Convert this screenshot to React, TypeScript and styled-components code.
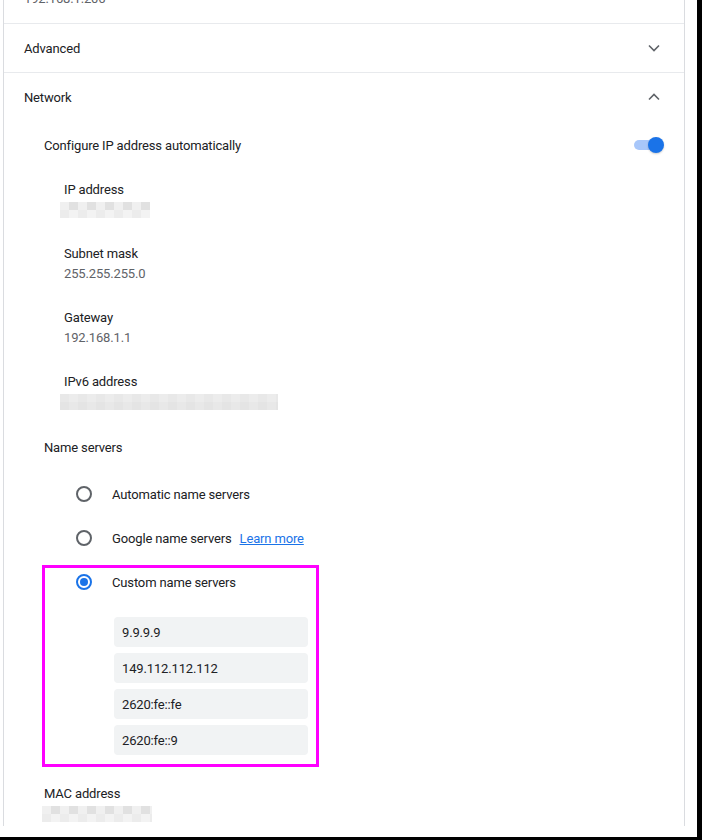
import styled, { createGlobalStyle } from 'styled-components';

const GlobalStyle = createGlobalStyle`
    html, body {
        margin: 0;
        padding: 0;
        background: #000;
    }
    body {
        font-family: Roboto, "Noto Sans", "Liberation Sans", sans-serif;
        font-size: 13px;
        letter-spacing: -0.15px;
        color: #202124;
    }
`

const Screen = styled.div`
    width: 697px;
    height: 837px;
    background: #fff;
    overflow: hidden;
`

const Card = styled.div`
    margin-left: 3px;
    width: 682px;
    height: 100%;
    box-sizing: border-box;
    border-left: 1px solid #dadce0;
    border-right: 1px solid #dadce0;
`

const TopValue = styled.div`
    margin-top: -11px;
    padding: 0 20px 14px;
    line-height: 20px;
    color: #5f6368;
`

const Row = styled.div`
    height: 48px;
    border-top: 1px solid #e8eaed;
    padding: 0 20px;
    display: flex;
    align-items: center;
    justify-content: space-between;
`

const RowTitle = styled.span`
    font-size: 13px;
    color: #202124;
`

const NetworkBody = styled.div`
    padding-left: 40px;
`

const ConfigRow = styled.div`
    height: 48px;
    padding-right: 20px;
    display: flex;
    align-items: center;
    justify-content: space-between;
`

const Toggle = styled.div`
    position: relative;
    width: 31px;
    height: 16px;

    .track {
        position: absolute;
        left: 1px;
        top: 3px;
        width: 24px;
        height: 10px;
        border-radius: 5px;
        background: #a8c7fa;
    }

    .knob {
        position: absolute;
        right: 0;
        top: 0;
        width: 16px;
        height: 16px;
        border-radius: 50%;
        background: #1a73e8;
        box-shadow: 0 1px 2px rgba(0, 0, 0, 0.2);
    }
`

const Details = styled.div`
    padding: 11px 0 0 20px;
    display: flex;
    flex-direction: column;
    gap: 24px;
`

const Field = styled.div`
    display: flex;
    flex-direction: column;
    line-height: 20px;
`

const Label = styled.div`
    color: #202124;
`

const Value = styled.div`
    color: #5f6368;
`

const SectionLabel = styled.div<{ $top: number }>`
    margin-top: ${p => p.$top}px;
    line-height: 20px;
    color: #202124;
`

const RadioList = styled.div`
    margin-top: 14px;
    margin-left: 32px;
    display: flex;
    flex-direction: column;
`

const RadioRow = styled.div`
    height: 44px;
    display: flex;
    align-items: center;
    gap: 20px;
`

const RadioCircle = styled.span<{ $checked?: boolean }>`
    width: 16px;
    height: 16px;
    box-sizing: border-box;
    border-radius: 50%;
    border: 2px solid ${p => (p.$checked ? '#1a73e8' : '#5f6368')};
    display: flex;
    align-items: center;
    justify-content: center;
    flex-shrink: 0;

    &::after {
        content: '';
        display: ${p => (p.$checked ? 'block' : 'none')};
        width: 8px;
        height: 8px;
        border-radius: 50%;
        background: #1a73e8;
    }
`

const LearnMore = styled.a`
    margin-left: -12px;
    color: #1a73e8;
    text-decoration: underline;
    cursor: pointer;
`

const CustomGroup = styled.div`
    position: relative;

    &::after {
        content: '';
        position: absolute;
        top: 5px;
        left: -34px;
        width: 277px;
        height: 202px;
        box-sizing: border-box;
        border: 3px solid #ff00ff;
        pointer-events: none;
    }
`

const Inputs = styled.div`
    margin: 13px 0 0 38px;
    display: flex;
    flex-direction: column;
    gap: 6px;
`

const ServerInput = styled.div`
    width: 194px;
    height: 30px;
    box-sizing: border-box;
    padding: 0 8px;
    border-radius: 4px;
    background: #f1f3f4;
    display: flex;
    align-items: center;
    color: #202124;
`

const MacField = styled(Field)`
    margin-top: 29px;
`

const BlurBox = styled.svg<{ $shift: number }>`
    display: block;
    margin: 2px 0 2px ${p => p.$shift}px;
`

const Chevron = ({ up }: { up?: boolean }) => (
    <svg width="20" height="20" viewBox="0 0 20 20">
        <path
            d={up ? 'M5 12.5 L10 7.5 L15 12.5' : 'M5 7.5 L10 12.5 L15 7.5'}
            fill="none"
            stroke="#5f6368"
            strokeWidth="1.6"
        />
    </svg>
)

const shades = ['#e4e4e4', '#ececec', '#f3f3f3', '#dedede', '#e8e8e8', '#f0f0f0', '#e1e1e1']

// pixelated placeholder for a hidden value
const Blur = ({ width, shift = -4, seed = 1 }: { width: number; shift?: number; seed?: number }) => {
    const cell = 9
    const cols = Math.ceil(width / cell)
    const cells = []
    for (let r = 0; r < 2; r++) {
        for (let c = 0; c < cols; c++) {
            const idx = (c * 7 + r * 3 + seed * 5 + ((c * c + seed) % 4)) % shades.length
            cells.push(<rect key={`${r}-${c}`} x={c * cell} y={r * 8} width={cell} height={8} fill={shades[idx]} />)
        }
    }
    return (
        <BlurBox $shift={shift} width={width} height={16} viewBox={`0 0 ${width} 16`}>
            {cells}
        </BlurBox>
    )
}

const servers = ['9.9.9.9', '149.112.112.112', '2620:fe::fe', '2620:fe::9']

const App = () => {
    return (
        <Screen>
            <GlobalStyle />
            <Card>
                <TopValue>192.168.1.206</TopValue>
                <Row>
                    <RowTitle>Advanced</RowTitle>
                    <Chevron />
                </Row>
                <Row>
                    <RowTitle>Network</RowTitle>
                    <Chevron up />
                </Row>
                <NetworkBody>
                    <ConfigRow>
                        <span>Configure IP address automatically</span>
                        <Toggle>
                            <div className="track" />
                            <div className="knob" />
                        </Toggle>
                    </ConfigRow>
                    <Details>
                        <Field>
                            <Label>IP address</Label>
                            <Blur width={90} seed={2} />
                        </Field>
                        <Field>
                            <Label>Subnet mask</Label>
                            <Value>255.255.255.0</Value>
                        </Field>
                        <Field>
                            <Label>Gateway</Label>
                            <Value>192.168.1.1</Value>
                        </Field>
                        <Field>
                            <Label>IPv6 address</Label>
                            <Blur width={218} seed={3} />
                        </Field>
                    </Details>
                    <SectionLabel $top={26}>Name servers</SectionLabel>
                    <RadioList>
                        <RadioRow>
                            <RadioCircle />
                            <span>Automatic name servers</span>
                        </RadioRow>
                        <RadioRow>
                            <RadioCircle />
                            <span>Google name servers</span>
                            <LearnMore>Learn more</LearnMore>
                        </RadioRow>
                        <CustomGroup>
                            <RadioRow>
                                <RadioCircle $checked />
                                <span>Custom name servers</span>
                            </RadioRow>
                            <Inputs>
                                {servers.map(s => (
                                    <ServerInput key={s}>{s}</ServerInput>
                                ))}
                            </Inputs>
                        </CustomGroup>
                    </RadioList>
                    <MacField>
                        <Label>MAC address</Label>
                        <Blur width={110} shift={-2} seed={5} />
                    </MacField>
                </NetworkBody>
            </Card>
        </Screen>
    )
}

export default App
